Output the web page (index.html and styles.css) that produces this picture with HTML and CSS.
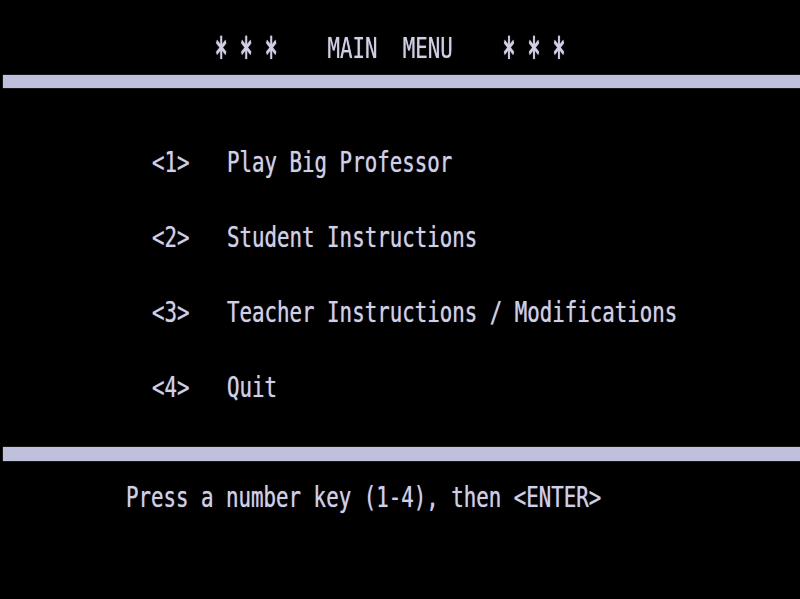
FILE: index.html
```html
<!DOCTYPE html>
<html>
<head>
    <title>Big Professor - Main Menu</title>
    <link rel="stylesheet" href="styles.css">
</head>
<body>
    <div class="screen">
        <div class="line title"><span class="star">*</span> <span class="star">*</span> <span class="star">*</span>    MAIN  MENU    <span class="star">*</span> <span class="star">*</span> <span class="star">*</span></div>
        <div class="bar bar-top"></div>

        <div class="menu">
            <div class="line item">&lt;1&gt;   Play Big Professor</div>
            <div class="line item">&lt;2&gt;   Student Instructions</div>
            <div class="line item">&lt;3&gt;   Teacher Instructions / Modifications</div>
            <div class="line item">&lt;4&gt;   Quit</div>
        </div>

        <div class="bar bar-bottom"></div>
        <div class="line prompt">Press a number key (1-4), then &lt;ENTER&gt;</div>
    </div>
</body>
</html>
```

FILE: styles.css
```css
body {
    margin: 0;
    background-color: #000;
    color: #cfcfe6;
    font-family: 'DejaVu Sans Mono', 'Liberation Mono', monospace;
    overflow: hidden;
}
.screen {
    width: 800px;
    height: 599px;
    padding-top: 35px;
    box-sizing: border-box;
}
/* 64-column text: tall narrow cells, 12.5px wide */
.line {
    font-size: 28px;
    line-height: 28px;
    height: 28px;
    white-space: pre;
    transform: scaleX(0.742);
    transform-origin: 0 0;
    text-shadow: 0 0 1px rgba(207, 207, 230, 0.7);
}
.title {
    margin-left: 215px;
}
/* the character set draws * as a full-height glyph */
.star {
    display: inline-block;
    font-weight: bold;
    transform: scaleY(1.75);
    transform-origin: 50% 3px;
}
.bar {
    margin-left: 3px;
    background-color: #bfc0dc;
    box-shadow: 0 0 1px rgba(191, 192, 220, 0.8);
}
.bar-top {
    margin-top: 12px;
    height: 13px;
}
.menu {
    margin-top: 61px;
    display: flex;
    flex-direction: column;
    gap: 47px;
}
.item {
    margin-left: 152px;
}
.bar-bottom {
    margin-top: 45px;
    height: 14px;
}
.prompt {
    margin-top: 23px;
    margin-left: 126px;
}
```
